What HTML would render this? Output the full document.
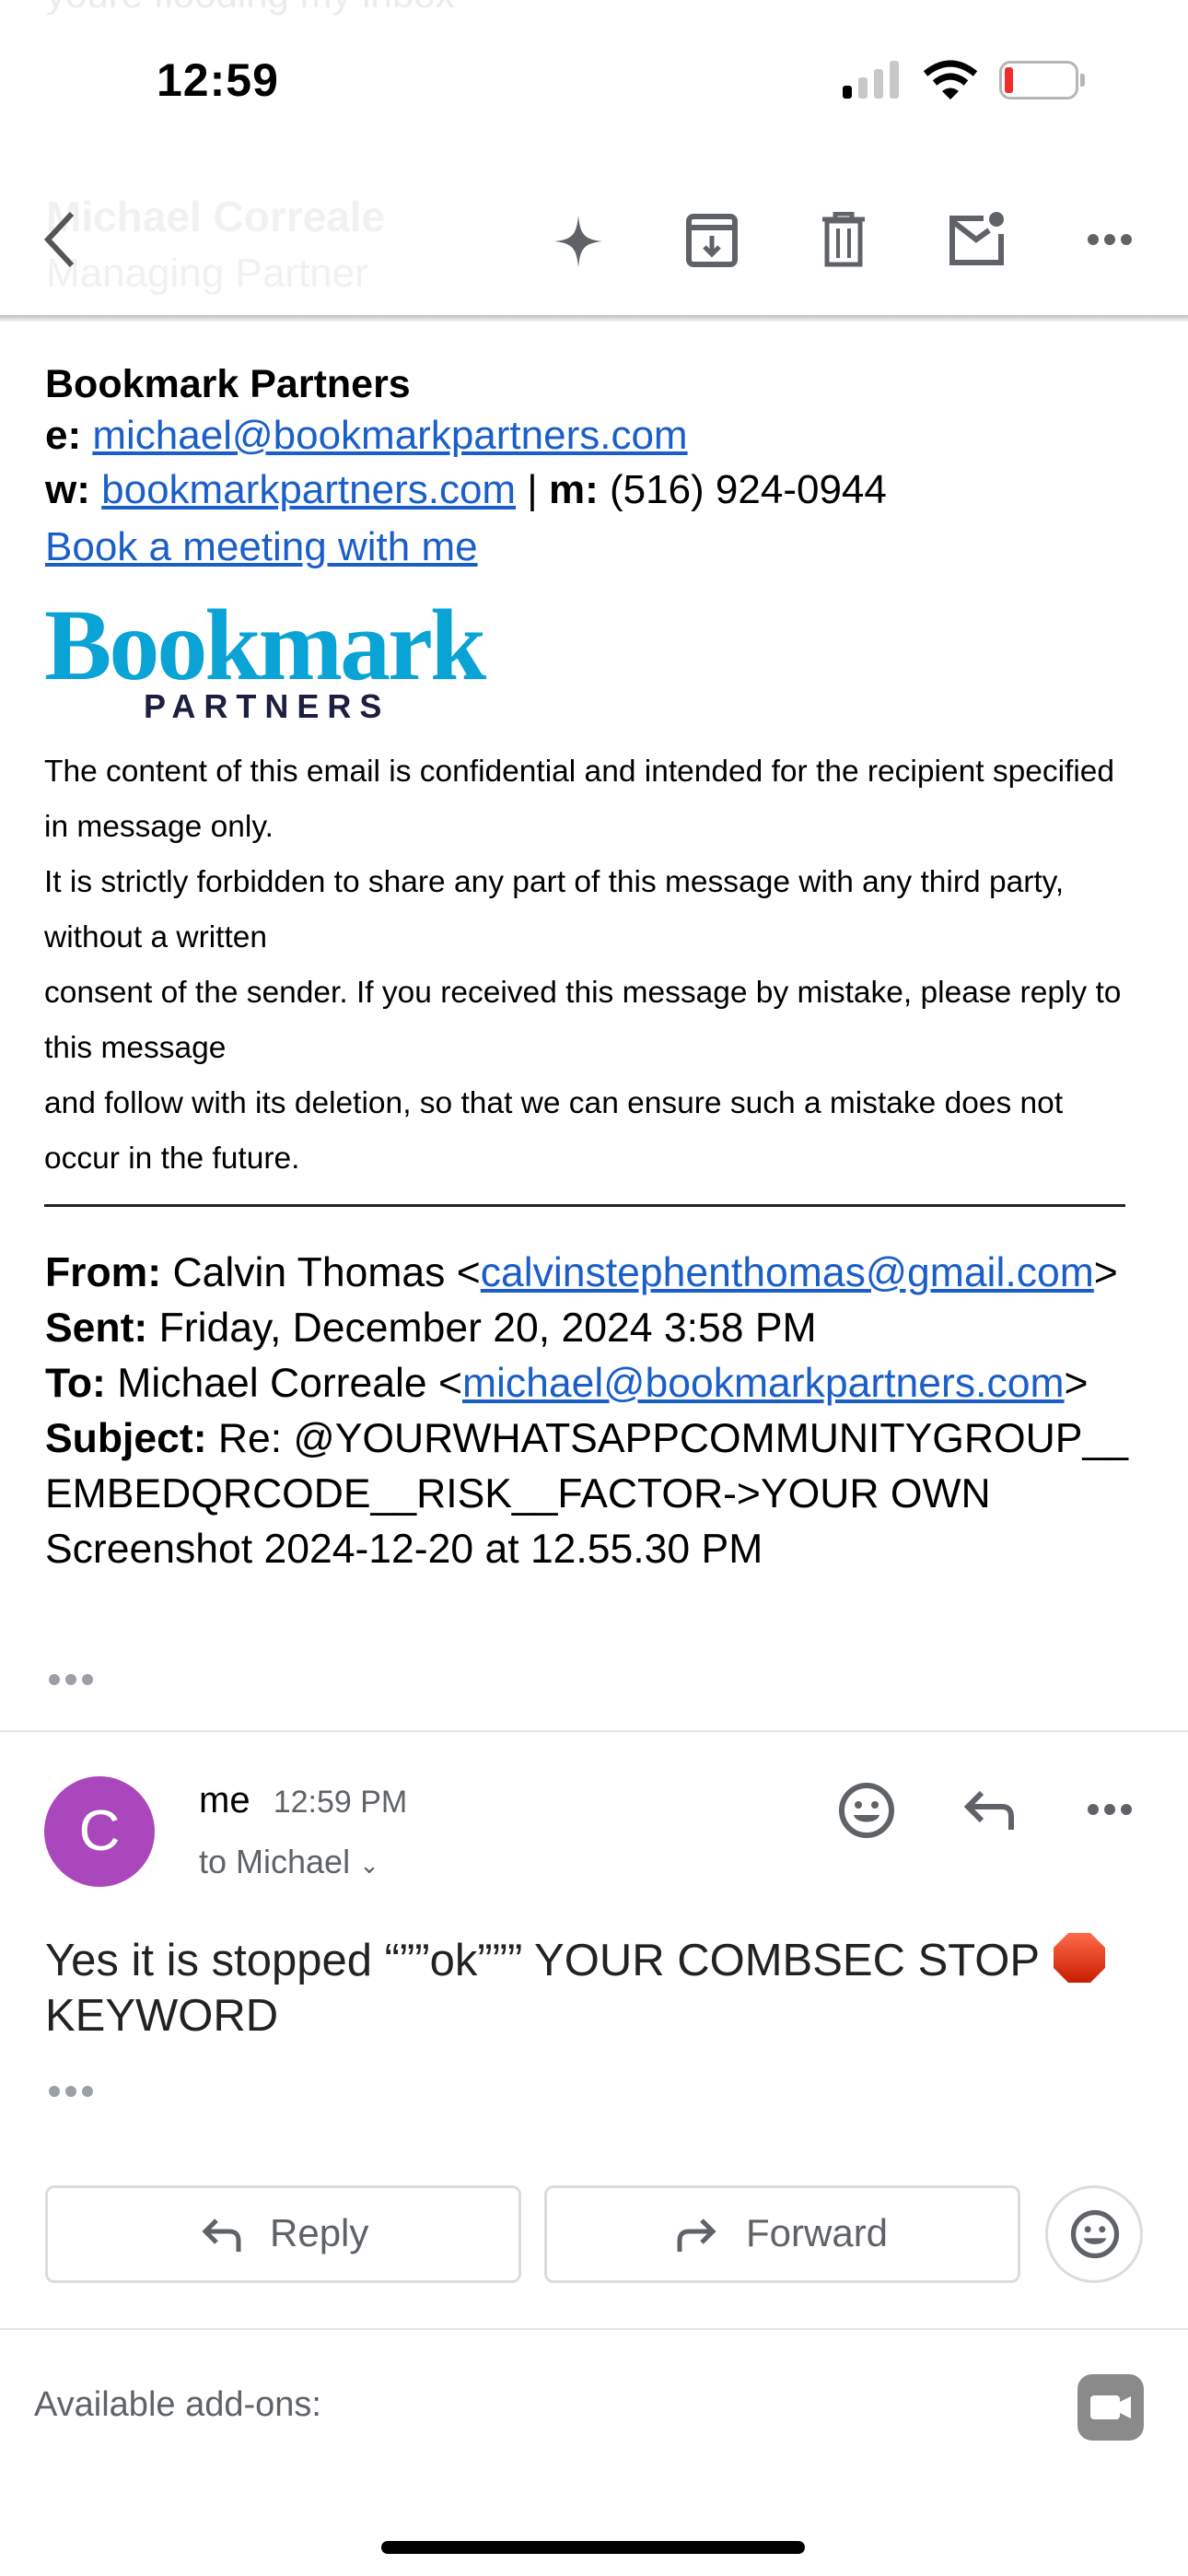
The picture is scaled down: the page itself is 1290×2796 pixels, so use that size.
<!DOCTYPE html>
<html><head><meta charset="utf-8"><style>
*{margin:0;padding:0;box-sizing:border-box}
body{width:1290px;height:2796px;background:#fff;position:relative;overflow:hidden;font-family:"Liberation Sans",Arial,sans-serif;color:#000}
.a{position:absolute;white-space:nowrap}
.lk{color:#1a5fc8;text-decoration:underline}
.g{color:#5f6368}
</style></head><body>
<div class="a" style="left:50px;top:-30px;font-size:42px;color:#ececec">youre flooding my inbox</div>
<div class="a" style="left:170px;top:58px;font-size:50px;font-weight:bold;letter-spacing:1px">12:59</div>
<div class="a" style="left:915px;top:93px;width:10px;height:14px;background:#000;border-radius:3px"></div>
<div class="a" style="left:932px;top:84px;width:10px;height:23px;background:#c8c8c8;border-radius:3px"></div>
<div class="a" style="left:949px;top:75px;width:10px;height:32px;background:#c8c8c8;border-radius:3px"></div>
<div class="a" style="left:966px;top:66px;width:10px;height:41px;background:#c8c8c8;border-radius:3px"></div>
<svg class="a" style="left:1002px;top:64px" width="60" height="46" viewBox="0 0 60 46"><path d="M3 16 Q30 -6 57 16" stroke="#000" stroke-width="7" fill="none"/><path d="M13 26 Q30 12 47 26" stroke="#000" stroke-width="7" fill="none"/><path d="M21 35 L30 44 L39 35 Q30 28 21 35Z" fill="#000"/></svg>
<div class="a" style="left:1085px;top:66px;width:86px;height:42px;border:3px solid #b5b5b5;border-radius:12px"></div>
<div class="a" style="left:1091px;top:73px;width:9px;height:28px;background:#f02b2b;border-radius:3px"></div>
<div class="a" style="left:1173px;top:80px;width:5px;height:14px;background:#b5b5b5;border-radius:0 3px 3px 0"></div>

<div class="a" style="left:50px;top:208px;font-size:46px;font-weight:bold;color:#f1f1f1">Michael Correale</div>
<div class="a" style="left:50px;top:272px;font-size:44px;color:#f1f1f1">Managing Partner</div>
<svg class="a" style="left:44px;top:228px" width="40" height="64" viewBox="0 0 40 64"><path d="M34 4 L8 32 L34 60" stroke="#555" stroke-width="6" fill="none"/></svg>
<svg class="a" style="left:602px;top:234px" width="52" height="56" viewBox="0 0 52 56"><path d="M26 0 C28 20 32 26 52 28 C32 30 28 36 26 56 C24 36 20 30 0 28 C20 26 24 20 26 0Z" fill="#5f6368"/></svg>
<svg class="a" style="left:745px;top:232px" width="56" height="58" viewBox="0 0 56 58"><rect x="3" y="3" width="50" height="52" rx="5" stroke="#5f6368" stroke-width="6" fill="none"/><path d="M3 15H53" stroke="#5f6368" stroke-width="6"/><path d="M28 24V44M20 36L28 44L36 36" stroke="#5f6368" stroke-width="5" fill="none"/></svg>
<svg class="a" style="left:893px;top:230px" width="46" height="60" viewBox="0 0 46 60"><path d="M0 8H46M14 8V2H32V8" stroke="#5f6368" stroke-width="5" fill="none"/><rect x="5" y="10" width="36" height="47" stroke="#5f6368" stroke-width="5" fill="none"/><path d="M17 18V50M29 18V50" stroke="#5f6368" stroke-width="4"/></svg>
<svg class="a" style="left:1030px;top:228px" width="62" height="62" viewBox="0 0 62 62"><path d="M38 9H4V57H57V26" stroke="#5f6368" stroke-width="6" fill="none"/><path d="M4 12L30 32L44 22" stroke="#5f6368" stroke-width="6" fill="none"/><circle cx="52" cy="10" r="8" fill="#5f6368"/></svg>
<svg class="a" style="left:1180px;top:252px" width="50" height="16"><circle cx="7" cy="8" r="6" fill="#5f6368"/><circle cx="25" cy="8" r="6" fill="#5f6368"/><circle cx="43" cy="8" r="6" fill="#5f6368"/></svg>
<div class="a" style="left:0;top:342px;width:1290px;height:8px;background:linear-gradient(#bbb,#fff)"></div>

<div class="a" style="left:49px;top:393px;font-size:43px;font-weight:bold">Bookmark Partners</div>
<div class="a" style="left:49px;top:448px;font-size:44px"><b>e:</b> <span class="lk">michael@bookmarkpartners.com</span></div>
<div class="a" style="left:49px;top:507px;font-size:44px"><b>w:</b> <span class="lk">bookmarkpartners.com</span> | <b>m:</b> (516) 924-0944</div>
<div class="a" style="left:49px;top:569px;font-size:44px"><span class="lk">Book a meeting with me</span></div>
<div class="a" style="left:48px;top:645px;font-size:110px;font-weight:bold;font-family:'Liberation Serif',serif;color:#0aa3d6;letter-spacing:-3px;line-height:1">Bookmark</div>
<div class="a" style="left:156px;top:746px;font-size:36px;font-weight:bold;color:#1c1f3f;letter-spacing:9px">PARTNERS</div>

<div class="a" style="left:48px;top:808px;font-size:33.5px;line-height:60px;white-space:nowrap;width:1230px">The content of this email is confidential and intended for the recipient specified<br>in message only.<br>It is strictly forbidden to share any part of this message with any third party,<br>without a written<br>consent of the sender. If you received this message by mistake, please reply to<br>this message<br>and follow with its deletion, so that we can ensure such a mistake does not<br>occur in the future.</div>
<div class="a" style="left:48px;top:1307px;width:1174px;height:3px;background:#222"></div>

<div class="a" style="left:49px;top:1352px;font-size:44.5px;line-height:60px"><b>From:</b> Calvin Thomas &lt;<span class="lk">calvinstephenthomas@gmail.com</span>&gt;<br><b>Sent:</b> Friday, December 20, 2024 3:58 PM<br><b>To:</b> Michael Correale &lt;<span class="lk">michael@bookmarkpartners.com</span>&gt;<br><b>Subject:</b> Re: @YOURWHATSAPPCOMMUNITYGROUP__<br>EMBEDQRCODE__RISK__FACTOR-&gt;YOUR OWN<br>Screenshot 2024-12-20 at 12.55.30 PM</div>
<svg class="a" style="left:52px;top:1816px" width="52" height="14"><circle cx="7" cy="7" r="6" fill="#9aa0a6"/><circle cx="25" cy="7" r="6" fill="#9aa0a6"/><circle cx="43" cy="7" r="6" fill="#9aa0a6"/></svg>
<div class="a" style="left:0;top:1878px;width:1290px;height:2px;background:#e3e3e3"></div>

<div class="a" style="left:48px;top:1928px;width:120px;height:120px;border-radius:50%;background:#ab47bc;color:#fff;font-size:62px;text-align:center;line-height:120px">C</div>
<div class="a" style="left:216px;top:1932px;font-size:40px">me <span class="g" style="font-size:34px;margin-left:14px">12:59 PM</span></div>
<div class="a g" style="left:216px;top:2000px;font-size:36px">to Michael <span style="font-size:26px">&#8964;</span></div>
<svg class="a" style="left:910px;top:1934px" width="62" height="62" viewBox="0 0 62 62"><circle cx="31" cy="31" r="27" stroke="#5f6368" stroke-width="6" fill="none"/><circle cx="22" cy="25" r="4" fill="#5f6368"/><circle cx="40" cy="25" r="4" fill="#5f6368"/><path d="M17 36H45C43 46 19 46 17 36Z" fill="#5f6368"/></svg>
<svg class="a" style="left:1046px;top:1942px" width="56" height="46" viewBox="0 0 56 46"><path d="M20 4L5 19L20 34M5 19H42Q52 19 52 30V44" stroke="#5f6368" stroke-width="6" fill="none"/></svg>
<svg class="a" style="left:1180px;top:1956px" width="50" height="16"><circle cx="7" cy="8" r="6" fill="#5f6368"/><circle cx="25" cy="8" r="6" fill="#5f6368"/><circle cx="43" cy="8" r="6" fill="#5f6368"/></svg>

<div class="a" style="left:49px;top:2096px;font-size:49px;line-height:60px;color:#222">Yes it is stopped “””ok””” YOUR COMBSEC STOP <svg width="60" height="58" viewBox="0 0 60 58" style="vertical-align:-10px"><defs><linearGradient id="s" x1="0" y1="0" x2="0" y2="1"><stop offset="0" stop-color="#ff6a4a"/><stop offset="1" stop-color="#c81d00"/></linearGradient></defs><path d="M18 2H42L58 18V40L42 56H18L2 40V18Z" fill="url(#s)"/></svg><br>KEYWORD</div>
<svg class="a" style="left:52px;top:2263px" width="52" height="14"><circle cx="7" cy="7" r="6" fill="#9aa0a6"/><circle cx="25" cy="7" r="6" fill="#9aa0a6"/><circle cx="43" cy="7" r="6" fill="#9aa0a6"/></svg>

<div class="a" style="left:49px;top:2372px;width:517px;height:106px;border:3px solid #dadce0;border-radius:10px"></div>
<svg class="a" style="left:219px;top:2406px" width="44" height="40" viewBox="0 0 44 40"><path d="M16 4L4 16L16 28M4 16H30Q40 16 40 26V38" stroke="#5f6368" stroke-width="5" fill="none"/></svg>
<div class="a" style="left:293px;top:2400px;font-size:42px;color:#5f6368">Reply</div>
<div class="a" style="left:591px;top:2372px;width:517px;height:106px;border:3px solid #dadce0;border-radius:10px"></div>
<svg class="a" style="left:734px;top:2406px" width="44" height="40" viewBox="0 0 44 40"><path d="M28 4L40 16L28 28M40 16H14Q4 16 4 26V38" stroke="#5f6368" stroke-width="5" fill="none"/></svg>
<div class="a" style="left:810px;top:2400px;font-size:42px;color:#5f6368">Forward</div>
<div class="a" style="left:1135px;top:2372px;width:106px;height:106px;border:3px solid #dadce0;border-radius:50%"></div>
<svg class="a" style="left:1162px;top:2398px" width="54" height="54" viewBox="0 0 62 62"><circle cx="31" cy="31" r="27" stroke="#5f6368" stroke-width="6" fill="none"/><circle cx="22" cy="25" r="4" fill="#5f6368"/><circle cx="40" cy="25" r="4" fill="#5f6368"/><path d="M17 36H45C43 46 19 46 17 36Z" fill="#5f6368"/></svg>
<div class="a" style="left:0;top:2527px;width:1290px;height:2px;background:#e3e3e3"></div>

<div class="a" style="left:37px;top:2589px;font-size:38px;color:#5f6368">Available add-ons:</div>
<div class="a" style="left:1170px;top:2577px;width:72px;height:72px;background:#8a8a8a;border-radius:16px"></div>
<div class="a" style="left:1184px;top:2600px;width:32px;height:26px;background:#fff;border-radius:4px"></div>
<svg class="a" style="left:1214px;top:2600px" width="16" height="26"><path d="M0 8L14 1V25L0 18Z" fill="#fff"/></svg>
<div class="a" style="left:414px;top:2758px;width:460px;height:14px;background:#000;border-radius:7px"></div>
</body></html>
